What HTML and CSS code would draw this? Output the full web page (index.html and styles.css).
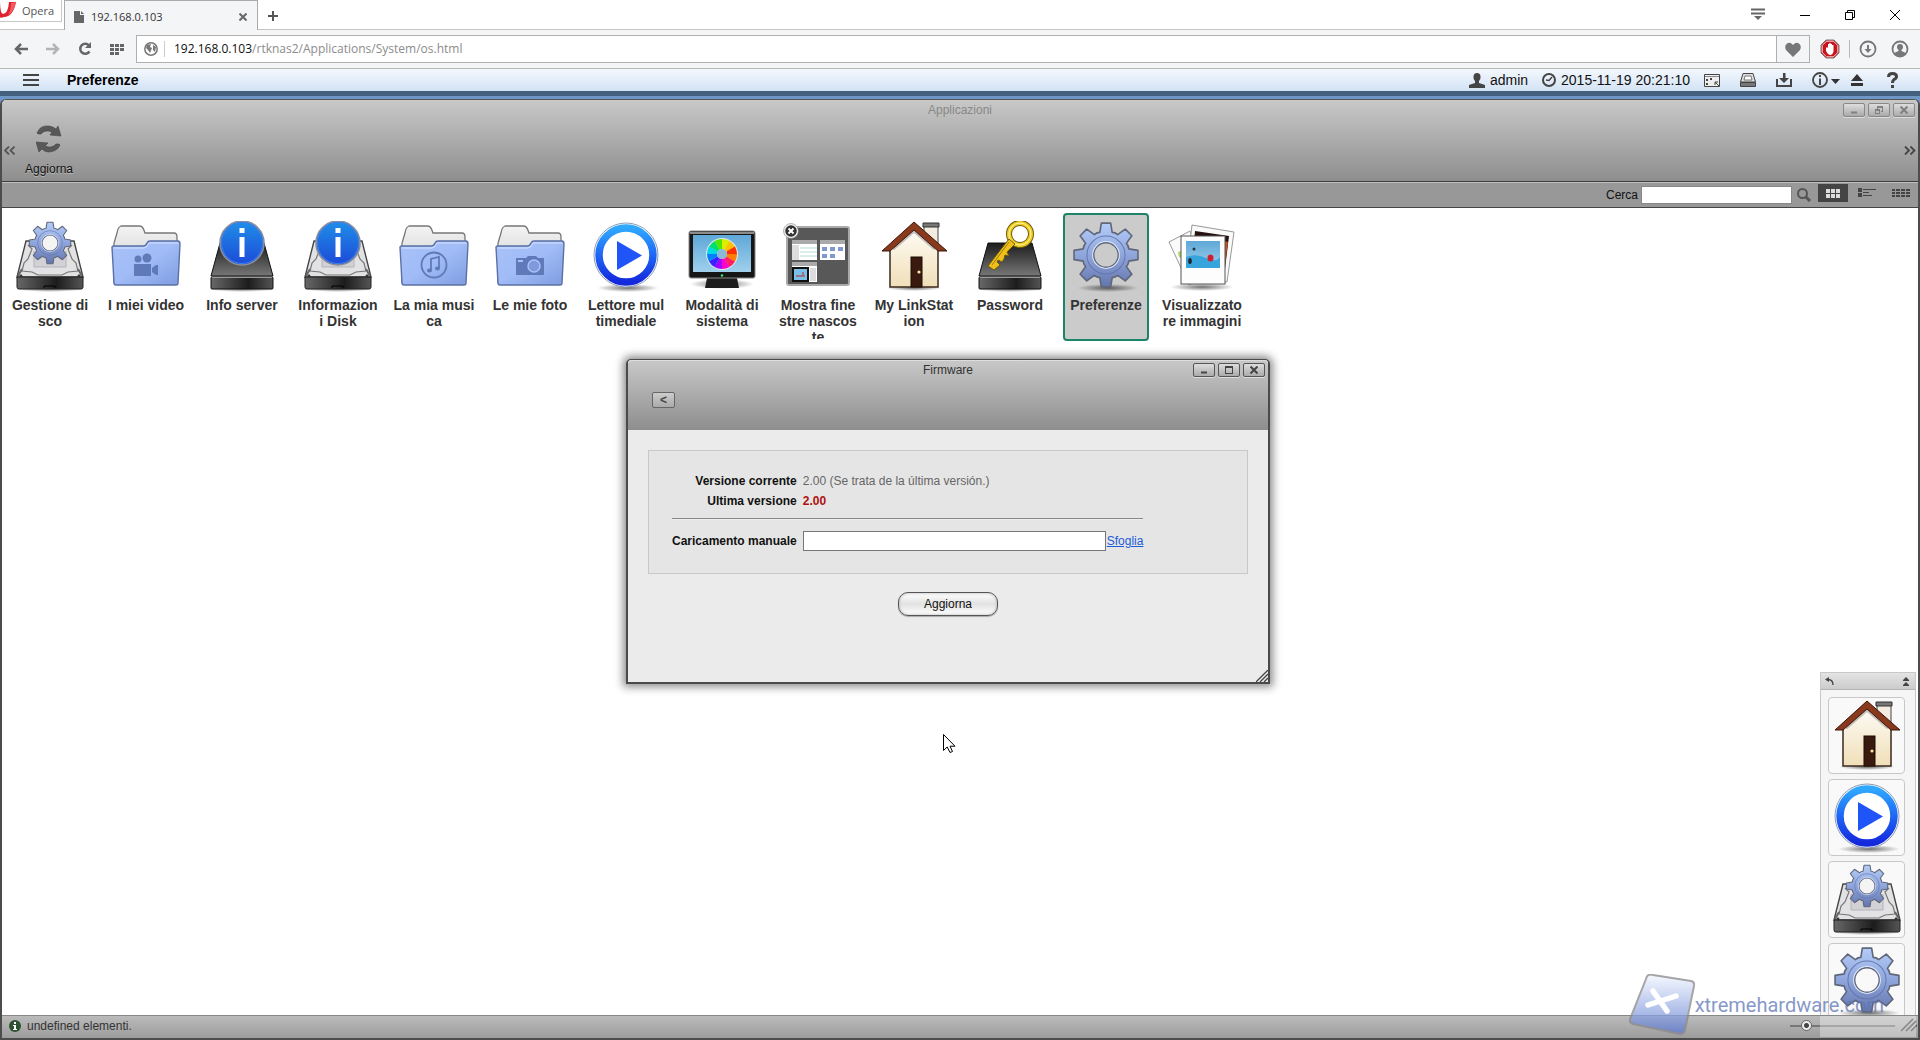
FILE: index.html
```html
<!DOCTYPE html>
<html lang="it">
<head>
<meta charset="utf-8">
<title>192.168.0.103</title>
<link rel="stylesheet" href="styles.css">
</head>
<body>
<svg class="defs" aria-hidden="true">
  <defs>
    <linearGradient id="gBlue" x1="0" y1="0" x2="0" y2="1"><stop offset="0" stop-color="#b4ccf8"/><stop offset=".5" stop-color="#8fa6dc"/><stop offset="1" stop-color="#6475ae"/></linearGradient>
    <linearGradient id="gFolder" x1="0" y1="0" x2="1" y2="1"><stop offset="0" stop-color="#a9c2fa"/><stop offset=".5" stop-color="#a0bbf6"/><stop offset="1" stop-color="#7d9ce0"/></linearGradient>
    <linearGradient id="gPaper" x1="0" y1="0" x2="0" y2="1"><stop offset="0" stop-color="#f4f4f4"/><stop offset="1" stop-color="#c4c4c4"/></linearGradient>
    <linearGradient id="gInfo" x1="0" y1="0" x2="0" y2="1"><stop offset="0" stop-color="#1f8fe8"/><stop offset="1" stop-color="#1d49d8"/></linearGradient>
    <linearGradient id="gPlay" x1="0" y1="0" x2="0" y2="1"><stop offset="0" stop-color="#2fa8ff"/><stop offset=".5" stop-color="#1f66f5"/><stop offset="1" stop-color="#1428dc"/></linearGradient>
    <linearGradient id="gBlack" x1="0" y1="0" x2="0" y2="1"><stop offset="0" stop-color="#1c1c1c"/><stop offset="1" stop-color="#777"/></linearGradient>
    <linearGradient id="gFront" x1="0" y1="0" x2="1" y2="0"><stop offset="0" stop-color="#686868"/><stop offset=".6" stop-color="#1c1c1c"/><stop offset="1" stop-color="#555"/></linearGradient>
    <linearGradient id="gWall" x1="0" y1="0" x2="0" y2="1"><stop offset="0" stop-color="#fffdf8"/><stop offset="1" stop-color="#f0dfb8"/></linearGradient>
    <linearGradient id="gSky" x1="0" y1="0" x2="0" y2="1"><stop offset="0" stop-color="#5fa8d8"/><stop offset="1" stop-color="#9fd0ec"/></linearGradient>
    <linearGradient id="gMark" x1="0" y1="0" x2="0" y2="1"><stop offset="0" stop-color="#f2f7ff"/><stop offset="1" stop-color="#5a78d0"/></linearGradient>
    <radialGradient id="gShade"><stop offset="0" stop-color="#000" stop-opacity=".55"/><stop offset="1" stop-color="#000" stop-opacity="0"/></radialGradient>
  </defs>
  <symbol id="gear" viewBox="-33 -33 66 66">
    <path fill="url(#gBlue)" fill-rule="evenodd" stroke="#60677a" stroke-width="1.6" stroke-linejoin="round" d="M-6-22L-4.5-31H4.5L6-22Q9-22 11.3-19.8L18.7-25.1 25.1-18.7 19.8-11.3Q22-9 22-6L31-4.5V4.5L22 6Q22 9 19.8 11.3L25.1 18.7 18.7 25.1 11.3 19.8Q9 22 6 22L4.5 31H-4.5L-6 22Q-9 22-11.3 19.8L-18.7 25.1-25.1 18.7-19.8 11.3Q-22 9-22 6L-31 4.5V-4.5L-22-6Q-22-9-19.8-11.3L-25.1-18.7-18.7-25.1-11.3-19.8Q-9-22-6-22ZM12 0A12 12 0 1 0-12 0A12 12 0 1 0 12 0Z"/>
    <circle r="18.5" fill="none" stroke="#6478b0" stroke-width="1"/><circle r="13" fill="none" stroke="#dfe8fb" stroke-width="1"/>
  </symbol>
  <symbol id="disk" viewBox="0 0 72 72">
    <ellipse cx="36" cy="68" rx="35" ry="3" fill="url(#gShade)"/>
    <path d="M12 20H60L69 56H3Z" fill="#e2e2e4" stroke="#444" stroke-width="1.4"/>
    <path d="M14 24L18 28L14 38L10 42L8 50L18 51L24 54H48L54 51L64 50L62 42L58 38L54 28L58 24" fill="none" stroke="#777" stroke-width="1.2"/>
    <path d="M20 30V46H52V30" fill="#d2d2d6" stroke="#b4b4b8"/>
    <path d="M8 48L4 55M64 48L68 55" stroke="#666" stroke-width="2"/>
    <path d="M3 56H69V66Q69 68 67 68H5Q3 68 3 66Z" fill="url(#gFront)" stroke="#222"/>
    <path d="M30 67V65H41V67" fill="none" stroke="#000"/><circle cx="7" cy="55" r="1.4" fill="#333"/><circle cx="65" cy="55" r="1.4" fill="#333"/>
  </symbol>
  <symbol id="diskgear" viewBox="0 0 72 72"><use href="#disk"/><circle cx="36" cy="22" r="9" fill="#f4f4f4"/><use href="#gear" x="14" y="0" width="44" height="44"/></symbol>
  <symbol id="box" viewBox="0 0 72 72">
    <ellipse cx="36" cy="68" rx="34" ry="3" fill="url(#gShade)"/>
    <path d="M14 22H58L67 55H5Z" fill="url(#gBlack)" stroke="#111"/>
    <rect x="5" y="56" width="62" height="12" rx="1" fill="url(#gFront)" stroke="#111"/><path d="M6 56.500H66" stroke="#999"/>
  </symbol>
  <symbol id="infoball" viewBox="0 0 46 46">
    <circle cx="23" cy="23" r="22" fill="url(#gInfo)" stroke="#8a8f9a" stroke-width="1.6"/><circle cx="23" cy="23" r="20.500" fill="none" stroke="#3d7ff0" stroke-width="1"/>
    <rect x="20.500" y="8" width="5" height="5" fill="#fff"/><path d="M20.500 17H25.500V37H20.500Z" fill="#fff"/>
  </symbol>
  <symbol id="folder" viewBox="0 0 72 72">
    <path d="M4 62V22L7 12Q8 6 11 5H30Q33 5 35 12H64Q67 12 67 16V30" fill="url(#gPaper)" stroke="#777" stroke-width="1.3"/>
    <path d="M2 26Q2 25 4 25H33Q36 25 37 22Q38 20 40 20H68Q70 20 70 23L68 62Q68 64 66 64H6Q4 64 4 62Z" fill="url(#gFolder)" stroke="#5c70a4" stroke-width="1.4"/>
    <path d="M4 27H34Q37 27 39 22H68" fill="none" stroke="#d8e4ff" stroke-width="1"/>
  </symbol>
  <symbol id="f-video" viewBox="0 0 72 72"><use href="#folder"/><g fill="#5f7ab8"><circle cx="28" cy="38" r="3.500"/><circle cx="37" cy="37" r="4.500"/><rect x="24" y="43" width="17" height="12"/><path d="M42 47L46 44H48V54H46L42 51Z"/></g></symbol>
  <symbol id="f-music" viewBox="0 0 72 72"><use href="#folder"/><g fill="none" stroke="#5f7ab8" stroke-width="1.8"><circle cx="36" cy="44" r="12.500"/><path d="M33 49V38L41 36V47"/></g><ellipse cx="31.500" cy="49.500" rx="2.500" ry="2" fill="#5f7ab8"/><ellipse cx="39.500" cy="47.500" rx="2.500" ry="2" fill="#5f7ab8"/></symbol>
  <symbol id="f-photo" viewBox="0 0 72 72"><use href="#folder"/><path d="M22 37H32L34 35H42L44 37H50V54H22Z" fill="#5f7ab8"/><circle cx="40" cy="45" r="6" fill="#7f9adc" stroke="#a9c2fa" stroke-width="1.5"/><rect x="24" y="39" width="5" height="2" fill="#a9c2fa"/></symbol>
  <symbol id="play" viewBox="0 0 72 72">
    <ellipse cx="38" cy="67" rx="31" ry="4" fill="url(#gShade)"/>
    <circle cx="36" cy="34" r="32" fill="#fff" stroke="#8a9ab8"/><circle cx="36" cy="34" r="27" fill="#fff" stroke="url(#gPlay)" stroke-width="7.500"/>
    <path d="M27 20V49L52 34.500Z" fill="#1f55f8"/>
  </symbol>
  <symbol id="screen" viewBox="0 0 72 72">
    <ellipse cx="36" cy="63" rx="32" ry="5" fill="url(#gShade)"/>
    <path d="M21 57H51L53 67H19Z" fill="#1c1c1c"/>
    <rect x="3" y="10" width="66" height="47" rx="2" fill="#161616" stroke="#888"/><path d="M4 11H68V13H4Z" fill="#8c8c8c"/>
    <rect x="7" y="14" width="58" height="37" fill="url(#gSky)"/><circle cx="36" cy="54.500" r="1.2" fill="#3e6"/>
    <circle cx="36" cy="33" r="16" fill="#dde8f0"/>
    <g fill="none" stroke-width="10" stroke-dasharray="1.030 10.970">
      <circle cx="36" cy="33" r="10" pathLength="12" stroke="#ff8000"/>
      <circle cx="36" cy="33" r="10" pathLength="12" stroke-dashoffset="-1" stroke="#ff2060"/>
      <circle cx="36" cy="33" r="10" pathLength="12" stroke-dashoffset="-2" stroke="#ff00c8"/>
      <circle cx="36" cy="33" r="10" pathLength="12" stroke-dashoffset="-3" stroke="#a000ff"/>
      <circle cx="36" cy="33" r="10" pathLength="12" stroke-dashoffset="-4" stroke="#3a20ff"/>
      <circle cx="36" cy="33" r="10" pathLength="12" stroke-dashoffset="-5" stroke="#0080ff"/>
      <circle cx="36" cy="33" r="10" pathLength="12" stroke-dashoffset="-6" stroke="#00d8e8"/>
      <circle cx="36" cy="33" r="10" pathLength="12" stroke-dashoffset="-7" stroke="#00e070"/>
      <circle cx="36" cy="33" r="10" pathLength="12" stroke-dashoffset="-8" stroke="#50e800"/>
      <circle cx="36" cy="33" r="10" pathLength="12" stroke-dashoffset="-9" stroke="#d8f000"/>
      <circle cx="36" cy="33" r="10" pathLength="12" stroke-dashoffset="-10" stroke="#ffc000"/>
      <circle cx="36" cy="33" r="10" pathLength="12" stroke-dashoffset="-11" stroke="#ff3000"/>
    </g>
    <circle cx="36" cy="33" r="5" fill="#8cb8d4"/>
  </symbol>
  <symbol id="windows" viewBox="0 0 72 72">
    <rect x="5" y="6" width="62" height="58" rx="2" fill="#585858" stroke="#aaa" stroke-width="2"/>
    <g fill="#fff"><rect x="10" y="19" width="25" height="20"/><rect x="38" y="19" width="25" height="20"/><rect x="10" y="41" width="25" height="20"/></g>
    <path d="M10 19H35V23H10ZM38 19H63V23H38ZM10 41H35V45H10Z" fill="#aaa"/><rect x="10" y="24" width="7" height="15" fill="#ddd"/>
    <path d="M18 27H35M18 31H35M18 35H35" stroke="#b8dcd4"/>
    <path d="M40 26H45V30H40ZM48 26H53V30H48ZM56 26H61V30H56ZM40 33H45V37H40ZM48 33H53V37H48Z" fill="#7f98d0"/>
    <rect x="11" y="47" width="15" height="13" fill="#7cc0e8" stroke="#111" stroke-width="2"/><path d="M14 55H23M21 51V54" stroke="#b22"/><rect x="28" y="47" width="6" height="13" fill="#ddd"/>
    <circle cx="9" cy="10" r="6.500" fill="#333" stroke="#eee" stroke-width="1.5"/><circle cx="9" cy="10" r="7.500" fill="none" stroke="#888" stroke-width=".6"/><path d="M6.500 7.500L11.500 12.500M11.500 7.500L6.500 12.500" stroke="#fff" stroke-width="2"/>
  </symbol>
  <symbol id="house" viewBox="0 0 72 72">
    <ellipse cx="36" cy="67" rx="28" ry="3" fill="url(#gShade)"/>
    <path d="M46 4H60V26H46Z" fill="#f4ece0" stroke="#444"/><path d="M45 2H61V6H45Z" fill="#777" stroke="#333"/>
    <path d="M12 66V26L36 6L60 26V66Z" fill="url(#gWall)" stroke="#3a2a1c" stroke-width="1.500"/>
    <path d="M15 28L36 10L57 28" fill="none" stroke="#999" stroke-opacity=".6" stroke-width="3"/>
    <path d="M36 1L69 30H60L36 9L12 30H4Z" fill="#8a3a1c" stroke="#3c1608"/>
    <rect x="33" y="36" width="11" height="30" fill="#3a1a0e" stroke="#1c0c04"/><circle cx="41" cy="51" r="1.600" fill="#f8e8a0"/>
  </symbol>
  <symbol id="key" viewBox="0 0 72 72"><use href="#box"/>
    <circle cx="46" cy="13" r="11" fill="none" stroke="#6e5a10" stroke-width="6"/><circle cx="46" cy="13" r="11" fill="none" stroke="#f0cc20" stroke-width="4"/><circle cx="46" cy="13" r="11" fill="none" stroke="#fff4a0" stroke-width="1"/>
    <path d="M35 18L41 23L33 31L35 35L31 34L30 38L28 41L24 39L23 41L26 44L20 49L14 45Z" fill="#eec018" stroke="#6e5a10"/><path d="M35 21L18 44" stroke="#a07c08"/>
  </symbol>
  <symbol id="photos" viewBox="0 0 72 72">
    <ellipse cx="36" cy="66" rx="32" ry="4" fill="url(#gShade)"/>
    <path d="M3 21L24 10L40 55L23 64Z" fill="#fafafa" stroke="#999"/><path d="M12 31L15 30V37L13 36Z" fill="#a8d868"/>
    <path d="M26 4L68 11L61 61L20 56Z" fill="#fafafa" stroke="#999"/><path d="M29 10L63 15L59 48L26 44Z" fill="#241210"/><path d="M58 20L62 21L59 44Z" fill="#c05020"/>
    <rect x="15" y="15" width="44" height="48" fill="#fdfdfd" stroke="#555"/><rect x="20" y="20" width="34" height="27" fill="url(#gSky)"/>
    <path d="M20 36Q30 32 40 37T54 36V47H20Z" fill="#38a4dc"/><ellipse cx="44.500" cy="37" rx="3" ry="3.500" fill="#d02030"/><ellipse cx="24" cy="40" rx="1.800" ry="3" fill="#223"/><circle cx="28" cy="28" r="1.500" fill="#234"/>
  </symbol>
  <symbol id="prefs" viewBox="0 0 72 72"><ellipse cx="38" cy="67" rx="31" ry="4" fill="url(#gShade)"/><use href="#gear" x="2" y="0" width="68" height="68"/></symbol>
</svg>

<header class="browser">
  <div class="tabstrip">
    <button class="opera" type="button"><svg width="18" height="18" viewBox="0 0 18 18"><path d="M-2-2A8 9 0 0 0 4 15Q13 15 16 0H9Q8 12 3 12Q0 12 0-2Z" fill="#e0222e"/><path d="M11 1Q11 8 8 13Q14 10 16 0Z" fill="#f25a60"/></svg>Opera</button>
    <div class="tab">
      <svg width="10" height="12" viewBox="0 0 10 12"><path d="M0 0H6V4H10V12H0Z" fill="#666"/><path d="M7 0L10 3H7Z" fill="#666"/></svg>
      <span class="tab-title">192.168.0.103</span>
      <button class="plain" type="button" aria-label="Chiudi scheda"><svg width="8" height="8" viewBox="0 0 8 8"><path d="M.5.5L7.500 7.500M7.500.5L.5 7.500" stroke="#666" stroke-width="2"/></svg></button>
    </div>
    <button class="plain newtab" type="button" aria-label="Nuova scheda"><svg width="10" height="10" viewBox="0 0 10 10"><path d="M5 0V10M0 5H10" stroke="#555" stroke-width="2"/></svg></button>
    <div class="wincontrols">
      <button class="plain" type="button" aria-label="Menu schede"><svg width="14" height="13" viewBox="0 0 14 13"><path d="M0 1.500H14M0 5.500H14" stroke="#666" stroke-width="2"/><path d="M3 8H11L7 12Z" fill="#666"/></svg></button>
      <button class="plain" type="button" aria-label="Riduci"><svg width="10" height="10" viewBox="0 0 10 10"><path d="M0 5.500H10" stroke="#000"/></svg></button>
      <button class="plain" type="button" aria-label="Ripristina"><svg width="10" height="10" viewBox="0 0 10 10"><path d="M.5 2.500H7.500V9.500H.5ZM2.500 2.500V.5H9.500V7.500H7.500" fill="none" stroke="#000"/></svg></button>
      <button class="plain" type="button" aria-label="Chiudi"><svg width="10" height="10" viewBox="0 0 10 10"><path d="M0 0L10 10M10 0L0 10" stroke="#000"/></svg></button>
    </div>
  </div>
  <div class="navbar">
    <button class="plain nav" type="button" aria-label="Indietro"><svg width="14" height="12" viewBox="0 0 14 12"><path d="M14 6H3M7 1L2 6L7 11" fill="none" stroke="#666" stroke-width="2.500"/></svg></button>
    <button class="plain nav" type="button" aria-label="Avanti"><svg width="14" height="12" viewBox="0 0 14 12"><path d="M0 6H11M7 1L12 6L7 11" fill="none" stroke="#b4b4b4" stroke-width="2.500"/></svg></button>
    <button class="plain nav" type="button" aria-label="Ricarica"><svg width="14" height="14" viewBox="0 0 14 14"><path d="M11 3.500A5 5 0 1 0 11.500 9.500" fill="none" stroke="#666" stroke-width="2.500"/><path d="M13 0V6H7Z" fill="#666"/></svg></button>
    <button class="plain nav" type="button" aria-label="Accesso rapido"><svg width="14" height="11" viewBox="0 0 14 11"><path d="M0 1.500H14M0 5.500H14M0 9.500H9" stroke="#666" stroke-width="3" stroke-dasharray="4 1"/></svg></button>
    <div class="address">
      <svg width="14" height="14" viewBox="0 0 14 14"><circle cx="7" cy="7" r="6.200" fill="#fff" stroke="#777" stroke-width="1.500"/><path d="M3 3L7 2L6 5L8 6L6 11L4 8L2 6ZM9 3L12 5L11 10L9 8Z" fill="#777"/></svg>
      <span class="url"><b>192.168.0.103</b>/rtknas2/Applications/System/os.html</span>
    </div>
    <button class="plain heart" type="button" aria-label="Preferiti"><svg width="16" height="15" viewBox="0 0 16 15"><path d="M8 15L1 8Q-1 4 2 1.500Q5-.5 8 3Q11-.5 14 1.500Q17 4 15 8Z" fill="#777"/></svg></button>
    <div class="exts">
      <button class="plain" type="button" aria-label="Blocco annunci"><svg width="20" height="20" viewBox="0 0 20 20"><path d="M6 1H14L19 6V14L14 19H6L1 14V6Z" fill="#c8141c" stroke="#777"/><path d="M6.500 2.200H13.500L17.800 6.500V13.500L13.500 17.800H6.500L2.200 13.500V6.500Z" fill="none" stroke="#f8d8d8"/><path d="M6 9L7 8L8 9V5H9.300V8V4H10.700V8V5H12V8V6H13.500V12Q13 16 10 16Q7.500 15.500 6 12Z" fill="#fff"/></svg></button>
      <span class="vline"></span>
      <button class="plain" type="button" aria-label="Download"><svg width="18" height="18" viewBox="0 0 18 18"><circle cx="9" cy="9" r="7.500" fill="none" stroke="#777" stroke-width="1.800"/><path d="M8 5H10V9H12.500L9 13L5.500 9H8Z" fill="#777"/></svg></button>
      <button class="plain profile" type="button" aria-label="Profilo"><svg width="18" height="18" viewBox="0 0 18 18"><circle cx="9" cy="9" r="7.500" fill="none" stroke="#777" stroke-width="1.800"/><circle cx="9" cy="7" r="3" fill="#777"/><path d="M3 13L7.500 11V8H10.500V11L15 13Q12 17 9 16.500Q5 16.500 3 13Z" fill="#777"/></svg></button>
    </div>
  </div>
</header>

<nav class="menubar">
  <button class="plain burger" type="button" aria-label="Menu"><svg width="16" height="12" viewBox="0 0 16 12"><path d="M0 1H16M0 6H16M0 11H16" stroke="#444" stroke-width="2"/></svg></button>
  <strong class="apptitle">Preferenze</strong>
  <span class="who"><svg width="16" height="15" viewBox="0 0 16 15"><path d="M0 15V12L6 10V8Q4 6 4.500 3Q5 0 8 0Q11 0 11.500 3Q12 6 10 8V10L16 12V15Z" fill="#444"/></svg>admin</span>
  <span class="clock"><svg width="14" height="14" viewBox="0 0 14 14"><circle cx="7" cy="7" r="6" fill="none" stroke="#444" stroke-width="2"/><path d="M10 4L7 7.500L4 7" fill="none" stroke="#444" stroke-width="1.500"/></svg>2015-11-19 20:21:10</span>
  <button class="plain mi" type="button" aria-label="Desktop"><svg width="16" height="13" viewBox="0 0 16 13"><path d="M.5.5H15.500V12.500H.5Z" fill="#eee" stroke="#444"/><path d="M1 2.500H15" stroke="#888"/><path d="M2 5H4V7H2ZM6 4H8V6H6ZM2 9H4V11H2Z" fill="#444"/><path d="M15 12L11 8M11 11V8H14" stroke="#444" fill="none"/></svg></button>
  <button class="plain mi" type="button" aria-label="Dischi"><svg width="16" height="14" viewBox="0 0 16 14"><path d="M3 .5H13L15.500 9H.5Z" fill="#ddd" stroke="#444"/><path d="M5 3H11L12 7H4Z" fill="#fff" stroke="#777"/><path d="M.5 9.500H15.500V13.500H.5Z" fill="#777" stroke="#444"/></svg></button>
  <button class="plain mi" type="button" aria-label="Scarica"><svg width="16" height="14" viewBox="0 0 16 14"><path d="M1 6V13H15V6" fill="none" stroke="#444" stroke-width="2"/><path d="M7 0H9.500V5H13L8 10L3 5H7Z" fill="#444"/></svg></button>
  <button class="plain mi wide" type="button" aria-label="Informazioni"><svg width="28" height="16" viewBox="0 0 28 16"><circle cx="8" cy="8" r="7" fill="none" stroke="#444" stroke-width="1.800"/><path d="M8 3V5M8 6.500V13" stroke="#444" stroke-width="2"/><path d="M19 7H28L23.500 12Z" fill="#333"/></svg></button>
  <button class="plain" type="button" aria-label="Espelli"><svg width="14" height="12" viewBox="0 0 14 12"><path d="M7 0L13 7H1ZM1 9H13V12H1Z" fill="#333"/></svg></button>
  <button class="plain help" type="button" aria-label="Aiuto"><svg width="11" height="16" viewBox="0 0 11 16"><path d="M1.500 5Q1.500 1.500 5.500 1.500Q9.500 1.500 9.500 4.500Q9.500 6.500 7 7.500Q5.500 8.500 5.500 11" fill="none" stroke="#444" stroke-width="3"/><rect x="4" y="13" width="3" height="3" fill="#444"/></svg></button>
</nav>

<main class="desktop">
  <section class="window">
    <div class="whead">
      <div class="titlebar">
        <h1 class="wtitle">Applicazioni</h1>
        <div class="wbtns faded">
          <button type="button" aria-label="Riduci"><svg width="8" height="8" viewBox="0 0 8 8"><path d="M1 6.500H7" stroke="currentColor" stroke-width="2"/></svg></button>
          <button type="button" aria-label="Ripristina"><svg width="8" height="8" viewBox="0 0 8 8"><path d="M0 3H5V8H0ZM1 5V7H4V5ZM2 0H8V6H6V5H7V2H3V3H2Z" fill="currentColor" fill-rule="evenodd"/></svg></button>
          <button type="button" aria-label="Chiudi"><svg width="8" height="8" viewBox="0 0 8 8"><path d="M.5.5L7.500 7.500M7.500.5L.5 7.500" stroke="currentColor" stroke-width="2"/></svg></button>
        </div>
      </div>
      <div class="tools">
        <button class="plain chev" type="button" aria-label="Precedente"><svg width="12" height="9" viewBox="0 0 12 9"><path d="M5 .5L1 4.500L5 8.500M10.500 .5L6.500 4.500L10.500 8.500" fill="none" stroke="#555" stroke-width="1.800"/></svg></button>
        <button class="plain refresh" type="button"><svg width="26" height="28" viewBox="0 0 26 28"><g fill="#585858" stroke="#444" stroke-width=".6"><path d="M1 8Q4 0 13 1Q17 1.500 20 4L22 1L25 11L14 10L16 7Q9 4 5 9L2 9Z"/><path d="M24 20Q21 27 12 27Q8 26.500 6 24L3 27L0 17L12 18L9 21Q16 24 20 19L23 19Z"/></g></svg>Aggiorna</button>
        <button class="plain chev last" type="button" aria-label="Successivo"><svg width="12" height="9" viewBox="0 0 12 9"><path d="M1 .5L5 4.500L1 8.500M6.500 .5L10.500 4.500L6.500 8.500" fill="none" stroke="#444" stroke-width="1.800"/></svg></button>
      </div>
    </div>
    <div class="searchbar">
      <label for="q">Cerca</label><input id="q" type="text" class="q">
      <button class="plain glass" type="button" aria-label="Cerca"><svg width="14" height="14" viewBox="0 0 14 14"><circle cx="5.500" cy="5.500" r="4.500" fill="none" stroke="#555" stroke-width="2"/><path d="M9 9L13 13" stroke="#555" stroke-width="3"/></svg></button>
      <button class="plain view on" type="button" aria-label="Icone"><svg width="14" height="9" viewBox="0 0 14 9"><path d="M0 2H14M0 7H14" stroke="#ddd" stroke-width="4" stroke-dasharray="4 1"/></svg></button>
      <button class="plain view" type="button" aria-label="Elenco"><svg width="18" height="10" viewBox="0 0 18 10"><path d="M0 0H4V4H0ZM0 5H4V9H0ZM5 1H18V2H5ZM5 4H11V5H5ZM5 7H14V8H5Z" fill="#444"/></svg></button>
      <button class="plain view" type="button" aria-label="Dettagli"><svg width="18" height="9" viewBox="0 0 18 9"><path d="M0 1H18M0 4H18M0 7H18" stroke="#444" stroke-width="2" stroke-dasharray="3 1 4 1 4 1 4 0"/></svg></button>
    </div>
    <div class="content">
      <div class="apps">
        <button class="app" type="button"><svg><use href="#diskgear"/></svg><span>Gestione disco</span></button>
        <button class="app" type="button"><svg><use href="#f-video"/></svg><span>I miei video</span></button>
        <button class="app" type="button"><svg viewBox="0 0 72 72"><use href="#box"/><use href="#infoball" x="13" y="-1" width="46" height="46"/></svg><span>Info server</span></button>
        <button class="app" type="button"><svg viewBox="0 0 72 72"><use href="#disk"/><use href="#infoball" x="13" y="-1" width="46" height="46"/></svg><span>Informazioni Disk</span></button>
        <button class="app" type="button"><svg><use href="#f-music"/></svg><span>La mia musica</span></button>
        <button class="app" type="button"><svg><use href="#f-photo"/></svg><span>Le mie foto</span></button>
        <button class="app" type="button"><svg><use href="#play"/></svg><span>Lettore mul<br>timediale</span></button>
        <button class="app" type="button"><svg><use href="#screen"/></svg><span>Modalità di sistema</span></button>
        <button class="app" type="button"><svg><use href="#windows"/></svg><span>Mostra finestre nascoste</span></button>
        <button class="app" type="button"><svg><use href="#house"/></svg><span>My LinkStation</span></button>
        <button class="app" type="button"><svg><use href="#key"/></svg><span>Password</span></button>
        <button class="app selected" type="button"><svg><use href="#prefs"/></svg><span>Preferenze</span></button>
        <button class="app" type="button"><svg><use href="#photos"/></svg><span>Visualizzatore immagini</span></button>
      </div>
      <aside class="dock">
        <div class="dockhead">
          <svg width="9" height="8" viewBox="0 0 9 8"><path d="M4 0V5L0 2.500Z" fill="#444"/><path d="M3 2.500Q8 2.500 8 8" fill="none" stroke="#444" stroke-width="1.300"/></svg>
          <svg width="6" height="9" viewBox="0 0 6 9"><path d="M3 0L6 3H0ZM3 5L6 8H0ZM0 3H6V4H0ZM0 8H6V9H0Z" fill="#444"/></svg>
        </div>
        <button class="tile" type="button" aria-label="My LinkStation"><svg><use href="#house"/></svg></button>
        <button class="tile" type="button" aria-label="Lettore multimediale"><svg><use href="#play"/></svg></button>
        <button class="tile" type="button" aria-label="Gestione disco"><svg><use href="#diskgear"/></svg></button>
        <button class="tile" type="button" aria-label="Preferenze"><svg><use href="#prefs"/></svg></button>
      </aside>
    </div>
    <footer class="status">
      <svg width="12" height="12" viewBox="0 0 12 12"><circle cx="6" cy="6" r="6" fill="#2c5230"/><path d="M5 2H7V4H5ZM4 5H7V9H8V10H4V9H5V6H4Z" fill="#fff"/></svg>
      <span>undefined elementi.</span>
      <input class="size" type="range" min="0" max="100" value="12" aria-label="Dimensione icone">
      <svg width="16" height="15" viewBox="0 0 16 15"><path d="M0 13L12 1M5 13L15 3M10 13L16 7" stroke="#444" stroke-width="1.500"/></svg>
    </footer>
  </section>

  <section class="dialog">
    <div class="dhead">
      <div class="titlebar">
        <h2 class="wtitle">Firmware</h2>
        <div class="wbtns">
          <button type="button" aria-label="Riduci"><svg width="8" height="8" viewBox="0 0 8 8"><path d="M1 6.500H7" stroke="currentColor" stroke-width="2"/></svg></button>
          <button type="button" aria-label="Ingrandisci"><svg width="8" height="8" viewBox="0 0 8 8"><path d="M0 0H8V8H0ZM1 2V7H7V2Z" fill="currentColor" fill-rule="evenodd"/></svg></button>
          <button type="button" aria-label="Chiudi"><svg width="8" height="8" viewBox="0 0 8 8"><path d="M.5.5L7.500 7.500M7.500.5L.5 7.500" stroke="currentColor" stroke-width="2"/></svg></button>
        </div>
      </div>
      <button class="back" type="button">&lt;</button>
    </div>
    <form class="dbody">
      <div class="group">
        <div class="fields">
          <b>Versione corrente</b><span class="grey">2.00 (Se trata de la última versión.)</span>
          <b>Ultima versione</b><b class="red">2.00</b>
          <hr>
          <label for="file">Caricamento manuale</label><span class="pick"><input id="file" type="text"><a href="#">Sfoglia</a></span>
        </div>
      </div>
      <button class="submit" type="button">Aggiorna</button>
    </form>
    <svg class="grip" width="12" height="12" viewBox="0 0 12 12"><path d="M0 12L12 0M4 12L12 4M8 12L12 8" stroke="#444" stroke-width="1.300"/></svg>
  </section>

  <svg class="cursor" width="13" height="20" viewBox="0 0 13 20"><path d="M.5.5V16.500L4.200 13L7 18.500L9.500 17.500L7 12.200H12Z" fill="#fff" stroke="#000"/></svg>
  <div class="watermark">
    <svg width="66" height="62" viewBox="0 0 66 62"><path d="M20 1Q21 0 24 1L62 7Q66 8 65 12L56 56Q55 60 51 60L4 50Q0 49 1 45L17 5Q18 1 20 1Z" fill="url(#gMark)" stroke="#888" stroke-width="2"/><path d="M24 17L38 37M47 22L19 31" stroke="#fff" stroke-width="5.500" stroke-linecap="round"/></svg>
    <span>xtremehardware.com</span>
  </div>
</main>
</body>
</html>
```

FILE: styles.css
```css
* { box-sizing: border-box; }

body {
  margin: 0;
  min-height: 100vh;
  display: flex;
  flex-direction: column;
  background: #fff;
  font: 12px/16px "Liberation Sans", Arial, sans-serif;
  color: #111;
}

svg { display: block; flex: none; }
.defs { position: absolute; width: 0; height: 0; }
button, input { font: inherit; color: inherit; }
button { padding: 0; }

.plain {
  border: 0;
  background: none;
  display: flex;
  align-items: center;
  justify-content: center;
}

/* Browser chrome */
.browser { font-family: "Open Sans", "Noto Sans", sans-serif; background: #f4f5f7; }
.tabstrip {
  display: flex;
  height: 30px;
  padding-right: 20px;
  background: #fff;
  border-bottom: 1px solid #c4c4c4;
}
.opera {
  display: flex;
  align-items: center;
  gap: 4px;
  width: 62px;
  height: 22px;
  margin-right: 2px;
  border: 1px solid #c8c8c8;
  border-width: 0 1px 1px 0;
  background: #fff;
  font-size: 11px;
  color: #555;
}
.tab {
  display: flex;
  align-items: center;
  gap: 7px;
  width: 194px;
  height: 30px;
  padding: 2px 10px 0 9px;
  border: 1px solid #aaa;
  border-bottom: 0;
  background: #f4f5f7;
  font-size: 11px;
  color: #333;
}
.tab-title { flex: 1; }
.newtab { width: 30px; padding-top: 2px; }
.wincontrols {
  display: flex;
  gap: 35px;
  margin-left: auto;
}
.navbar {
  display: flex;
  align-items: center;
  height: 39px;
  padding-left: 5px;
  border-bottom: 1px solid #b8b8b8;
}
.nav { width: 32px; height: 28px; }
.address {
  flex: 1;
  display: flex;
  align-items: center;
  height: 28px;
  margin-left: 3px;
  padding-left: 7px;
  gap: 6px;
  border: 1px solid #b0b0b0;
  background: #fff;
  font-size: 12px;
}
.url { padding-left: 9px; border-left: 1px solid #ccc; color: #8c8c8c; }
.url b { font-weight: 400; color: #111; }
.heart { width: 33px; height: 28px; border: 1px solid #b0b0b0; border-left: 0; }
.exts { display: flex; align-items: center; gap: 9px; padding: 0 11px 0 10px; }
.vline { width: 1px; height: 18px; background: #bbb; }
.profile { margin-left: 5px; }

/* NAS menu bar */
.menubar {
  display: flex;
  align-items: center;
  height: 27px;
  background: linear-gradient(#f4f8fd, #d2e2f5);
  border-bottom: 5px solid #44607f;
  background-clip: padding-box;
  font-size: 14px;
}
.burger { margin: 0 28px 0 23px; }
.apptitle { flex: 1; color: #000; }
.who, .clock { display: flex; align-items: center; gap: 5px; }
.who { margin-right: 14px; }
.clock { margin-right: 4px; }
.mi { width: 36px; height: 22px; }
.wide { width: 48px; }
.help { width: 56px; }

/* Main window */
.desktop {
  position: relative;
  flex: 1;
  display: flex;
  flex-direction: column;
  padding-top: 3px;
  background: #6f97c5;
}
.window {
  flex: 1;
  display: flex;
  flex-direction: column;
  border: 2px solid #4c4c4c;
  border-top: 1px solid #555;
  border-radius: 6px 6px 0 0;
  background: #fff;
  overflow: hidden;
}
.whead {
  height: 82px;
  border-bottom: 1px solid #3c3c3c;
  background: linear-gradient(#c8c8c8, #8e8e8e);
}
.titlebar {
  display: grid;
  grid-template-columns: 1fr auto 1fr;
  height: 19px;
  align-items: center;
}
.wtitle {
  grid-column: 2;
  margin: 0;
  font-size: 12px;
  font-weight: 400;
  color: #333;
}
.whead .wtitle { color: #888; }
.wbtns { display: flex; justify-content: flex-end; gap: 3px; padding-right: 3px; }
.wbtns button {
  display: flex;
  align-items: center;
  justify-content: center;
  width: 22px;
  height: 14px;
  border: 1px solid #555;
  border-radius: 2px;
  background: linear-gradient(#ddd, #aaa);
  box-shadow: 0 1px 0 #ddd;
  color: #444;
}
.faded button { border-color: #888; color: #808080; }
.tools { display: flex; align-items: center; height: 62px; }
.chev { width: 16px; height: 24px; padding-top: 1px; }
.chev.last { margin-left: auto; }
.refresh {
  flex-direction: column;
  gap: 8px;
  width: 62px;
  height: 62px;
  padding-top: 2px;
  text-shadow: 0 1px 0 #bbb;
}
.searchbar {
  display: flex;
  align-items: center;
  justify-content: flex-end;
  height: 26px;
  border-top: 1px solid #c0c0c0;
  border-bottom: 1px solid #444;
  background: #989898;
}
.q { width: 151px; height: 18px; margin-left: 3px; border: 1px solid #888; background: #fff; padding: 0 2px; }
.glass { width: 24px; height: 20px; }
.view { width: 34px; height: 18px; margin-bottom: 4px; }
.view.on { width: 30px; margin: 0 2px 4px; background: #444; }

.content { position: relative; flex: 1; overflow: hidden; }
.apps { display: flex; flex-wrap: wrap; gap: 10px; padding: 5px; }
.app {
  display: flex;
  flex-direction: column;
  align-items: center;
  gap: 4px;
  width: 86px;
  height: 128px;
  padding-top: 6px;
  border: 2px solid transparent;
  border-radius: 4px;
  background: none;
  overflow: hidden;
  font-size: 14px;
  font-weight: 700;
  color: #333;
}
.app svg, .tile svg { width: 72px; height: 72px; }
.app span { width: 82px; text-align: center; word-break: break-all; }
.selected { border-color: #1d8467; background: #cbcbcb; }

.dock {
  position: absolute;
  right: 2px;
  bottom: 0;
  display: flex;
  flex-direction: column;
  align-items: flex-start;
  gap: 5px;
  width: 96px;
  height: 343px;
  border: 1px solid #c8c8c8;
  border-bottom: 0;
  background: #f5f5f5;
  overflow: hidden;
}
.dockhead {
  flex: none;
  align-self: stretch;
  display: flex;
  justify-content: space-between;
  align-items: center;
  height: 17px;
  margin-bottom: 2px;
  padding: 0 6px 0 4px;
  border-bottom: 1px solid #b4b4b4;
  background: linear-gradient(#e4e4e4, #ccc);
}
.tile {
  flex: none;
  display: flex;
  align-items: center;
  justify-content: center;
  width: 77px;
  height: 77px;
  margin-left: 7px;
  border: 1px solid #c8c8c8;
  border-radius: 4px;
  background: #f9f9f9;
}

.status {
  position: relative;
  display: flex;
  align-items: center;
  gap: 6px;
  height: 23px;
  padding: 0 1px 3px 7px;
  border-top: 1px solid #888;
  background: linear-gradient(#bbb, #9c9c9c);
  color: #333;
}
.status::after {
  content: "";
  position: absolute;
  top: 0;
  right: 2px;
  width: 96px;
  height: 21px;
  background: rgba(255, 255, 255, .35);
}
.size {
  appearance: none;
  width: 105px;
  height: 12px;
  margin: 0 0 0 auto;
  background: linear-gradient(#777, #777) center / 100% 2px no-repeat;
}
.size::-webkit-slider-thumb {
  appearance: none;
  width: 11px;
  height: 11px;
  border: 1px solid #666;
  border-radius: 50%;
  background: radial-gradient(#444 2px, #eee 3px);
}

/* Firmware dialog */
.dialog {
  position: absolute;
  left: 626px;
  top: 263px;
  width: 644px;
  border: 2px solid #4a4a4a;
  border-top-width: 1px;
  border-radius: 5px 5px 0 0;
  background: #ebebeb;
  box-shadow: 0 0 8px 3px rgba(0, 0, 0, .45);
}
.dhead {
  height: 70px;
  border-radius: 4px 4px 0 0;
  background: linear-gradient(#c8c8c8, #8e8e8e);
  box-shadow: inset 0 1px 0 #ddd;
}
.back {
  width: 23px;
  height: 16px;
  margin: 13px 0 0 24px;
  border: 1px solid #666;
  border-radius: 2px;
  background: linear-gradient(#ccc, #aaa);
  line-height: 14px;
  font-weight: 700;
  color: #444;
}
.dbody {
  display: flex;
  flex-direction: column;
  align-items: center;
  gap: 18px;
  padding: 20px 20px 66px;
}
.group {
  width: 100%;
  padding: 20px 23px 22px;
  border: 1px solid #c8c8c8;
  background: #e5e5e5;
}
.fields {
  display: grid;
  grid-template-columns: auto auto;
  justify-content: start;
  grid-auto-rows: minmax(20px, auto);
  align-items: center;
  column-gap: 6px;
}
.fields > b:nth-child(odd), .fields label { font-weight: 700; text-align: right; }
.grey { color: #666; }
.red { color: #b01010; }
.fields hr {
  grid-column: 1 / -1;
  width: 100%;
  margin: 7px 0 11px;
  border: 0;
  border-top: 1px solid #888;
  border-bottom: 1px solid #eee;
}
.pick { display: flex; align-items: center; gap: 1px; }
.pick input { width: 303px; height: 20px; border: 1px solid #777; background: #fff; padding: 0 2px; }
.pick a { color: #1c5cd8; }
.submit {
  width: 100px;
  height: 24px;
  border: 1px solid #555;
  border-radius: 10px;
  background: linear-gradient(#fff, #e2e2e2 50%, #fff);
  box-shadow: inset 0 0 3px #aaa, 0 1px 1px #aaa;
}
.grip { position: absolute; right: 0; bottom: 0; }
.cursor { position: absolute; left: 943px; top: 638px; }

.watermark {
  position: absolute;
  right: 36px;
  bottom: 4px;
  display: flex;
  align-items: center;
  opacity: .75;
  pointer-events: none;
}
.watermark span { font: 20px/24px Roboto, sans-serif; color: #6076b6; }
```
